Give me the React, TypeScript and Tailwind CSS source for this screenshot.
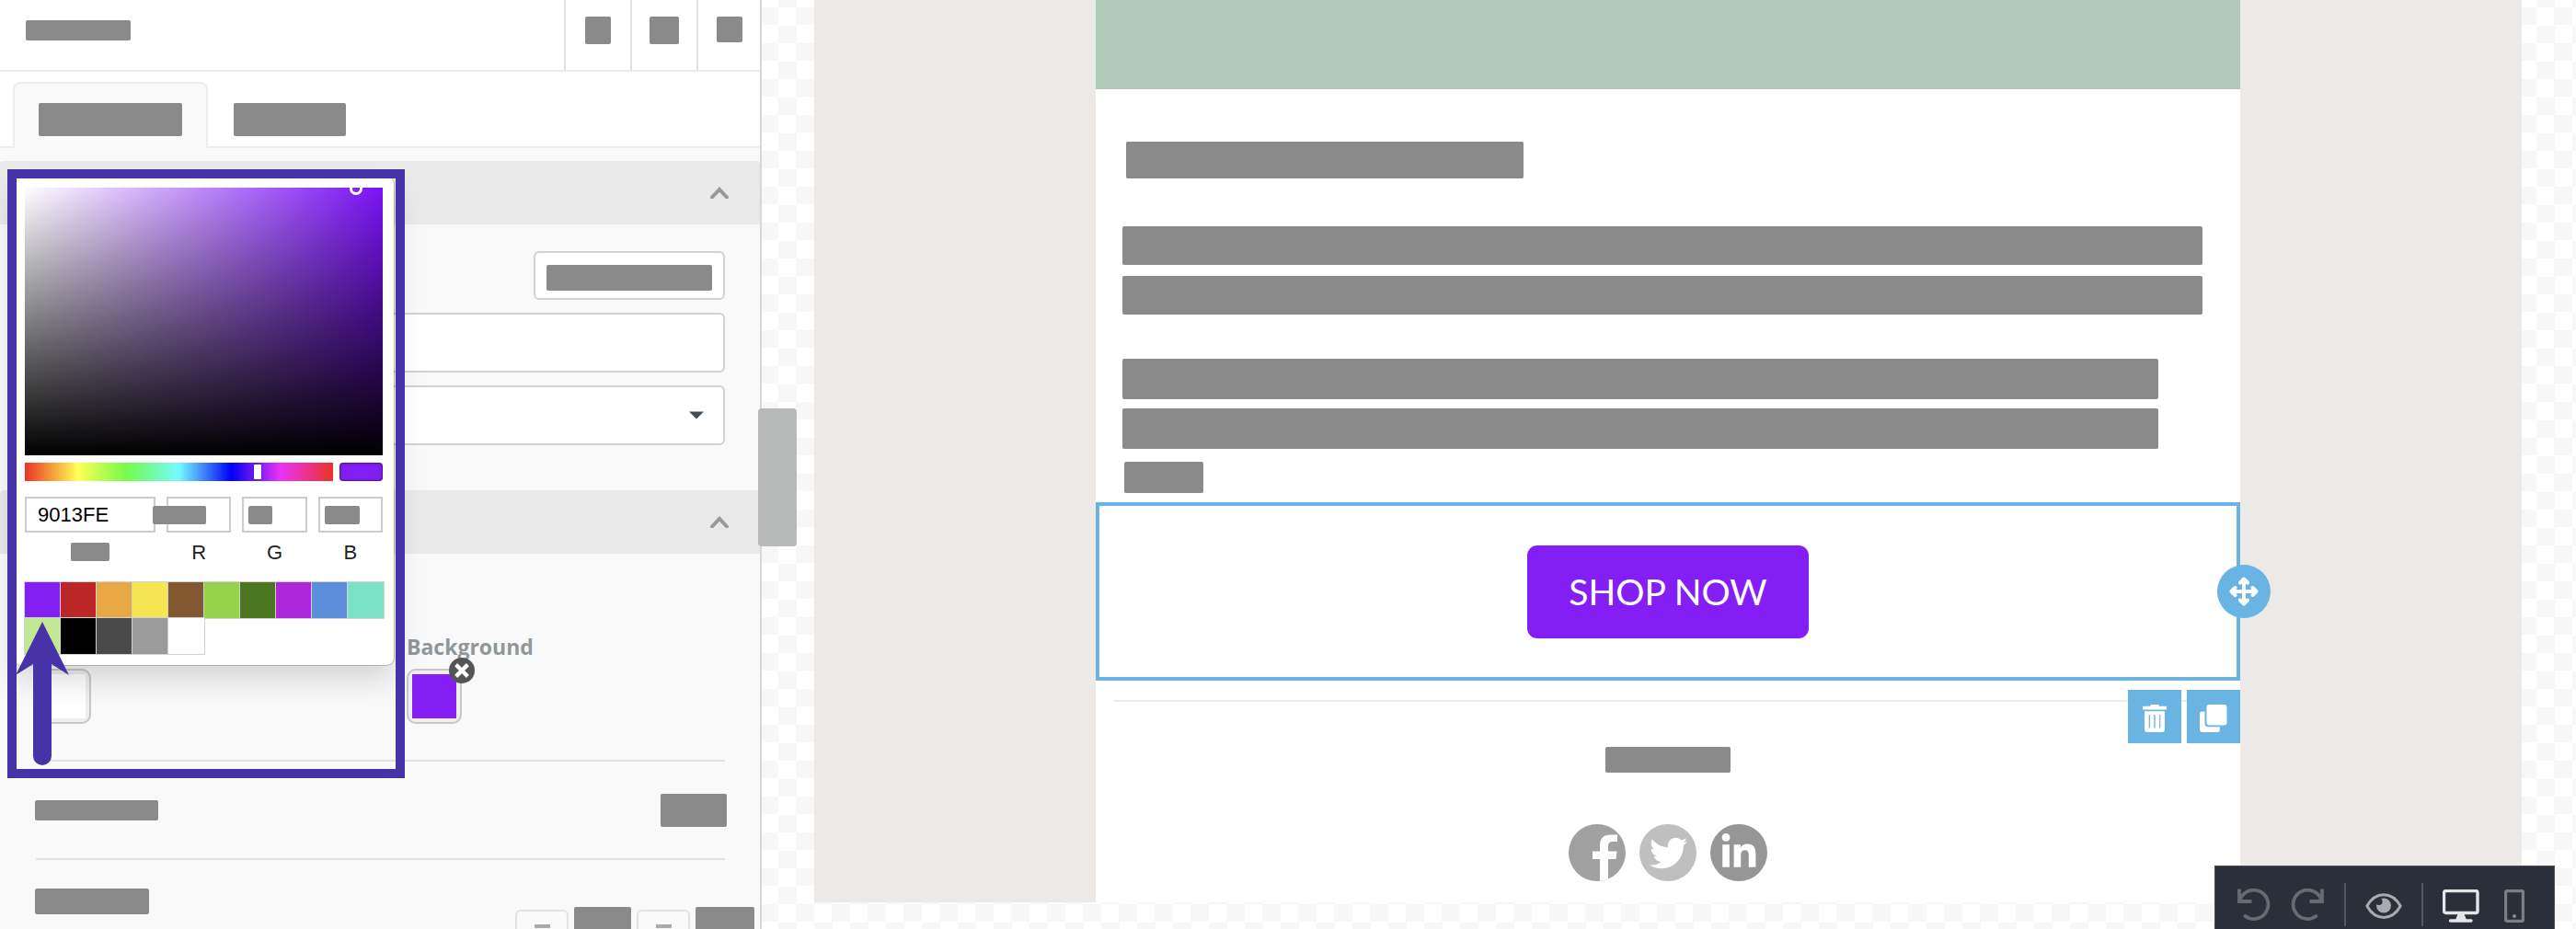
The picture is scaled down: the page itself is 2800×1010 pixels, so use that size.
import React, { useState } from "react";
import { FaTwitter, FaLinkedinIn } from "react-icons/fa";

/* Neutral block standing in for a piece of hidden copy. */
function Block({ className }: { className: string }) {
  return <span aria-hidden="true" className={`block rounded-xs bg-[#8a8a8a] ${className}`} />;
}

function Chevron() {
  return (
    <svg width="20" height="13" viewBox="0 0 20 13" fill="none" aria-hidden="true">
      <path d="M2 11.500 L10 3 L18 11.500" stroke="#999999" strokeWidth="4" strokeLinecap="round" />
    </svg>
  );
}

function SectionHeader({ label }: { label: string }) {
  return (
    <button
      type="button"
      aria-expanded="true"
      aria-label={label}
      className="flex h-[69px] w-full items-center justify-end rounded-t-sm bg-[#e9e9e9] pr-[34px]"
    >
      <Chevron />
    </button>
  );
}

function ColorWell({ label, color }: { label: string; color: string }) {
  return (
    <button
      type="button"
      aria-label={label}
      className="block size-[60px] rounded-[10px] border-2 border-[#c8c8c8] bg-[#eeeeee] p-1"
    >
      <span className="block size-full" style={{ backgroundColor: color }} />
    </button>
  );
}

function Stepper() {
  return (
    <button
      type="button"
      aria-label="Decrease"
      className="mt-[3px] flex h-10 w-[58px] justify-center rounded-md border-2 border-[#dfe3e3] bg-[#fafafa] pt-[14px]"
    >
      <span className="block h-1 w-[17px] bg-[#a9a9a9]" />
    </button>
  );
}

const HEADER_ACTIONS = [
  { cell: "w-[72px]", block: "h-[30px] w-7" },
  { cell: "w-[72px]", block: "h-[30px] w-8" },
  { cell: "w-[69px]", block: "h-7 w-7" },
];

function Sidebar() {
  return (
    <aside className="relative z-10 w-[828px] shrink-0 border-r-2 border-[#d5d8dd] bg-[#f9f9f9] font-['Open_Sans',sans-serif]">
      <header className="flex h-[78px] justify-between border-b-2 border-[#ececec] bg-white">
        <div className="pt-[22px] pl-7">
          <Block className="h-[22px] w-[114px]" />
        </div>
        <div className="flex">
          {HEADER_ACTIONS.map((action, i) => (
            <button
              key={i}
              type="button"
              aria-label={`Action ${i + 1}`}
              className={`flex items-start justify-center border-l-2 border-[#e2e2e4] pt-[18px] ${action.cell}`}
            >
              <Block className={action.block} />
            </button>
          ))}
        </div>
      </header>

      <div role="tablist" className="flex h-[83px] items-end border-b-2 border-[#ededed] bg-white pl-[14px]">
        <button
          type="button"
          role="tab"
          aria-selected="true"
          aria-label="Content"
          className="-mb-0.5 flex h-[72px] w-[212px] items-start rounded-t-lg border-2 border-b-0 border-[#ededed] bg-[#f9f9f9] px-[26px] pt-[21px]"
        >
          <Block className="h-9 w-full" />
        </button>
        <button
          type="button"
          role="tab"
          aria-selected="false"
          aria-label="Styles"
          className="-mb-0.5 flex h-[72px] items-start px-7 pt-[23px]"
        >
          <Block className="h-9 w-[122px]" />
        </button>
      </div>

      <div className="mt-[14px]">
        <SectionHeader label="Link section" />
        <div className="flex flex-col gap-[14px] pt-[29px] pr-[38px] pb-[49px] pl-[39px]">
          <button
            type="button"
            aria-label="Link type"
            className="flex h-[53px] w-[208px] items-center self-end rounded-md border-2 border-[#ced3d9] bg-white px-3 pt-1"
          >
            <Block className="h-7 w-full" />
          </button>
          <input
            aria-label="Link"
            className="h-[65px] w-full rounded-md border-2 border-[#ced3d9] bg-white px-4 text-2xl outline-none"
          />
          <div className="relative">
            <select
              aria-label="Target"
              className="block h-[65px] w-full appearance-none rounded-md border-2 border-[#ced3d9] bg-white px-4 text-2xl"
            >
              <option value="" />
            </select>
            <svg
              className="pointer-events-none absolute top-7 right-[23px]"
              width="16"
              height="9"
              viewBox="0 0 16 9"
              aria-hidden="true"
            >
              <path d="M0 0.5 H16 L8 8.5 Z" fill="#454c53" />
            </svg>
          </div>
        </div>
      </div>

      <SectionHeader label="Button section" />
      <div className="pt-[85px] pr-[38px] pl-[39px]">
        <div className="flex items-end border-b-2 border-[#e0e1e6] pb-[39px]">
          <div className="w-[403px]">
            <ColorWell label="Text color" color="#ffffff" />
          </div>
          <div className="flex flex-col gap-2">
            <span className="text-[23px]/8 font-bold text-[#8f979b]">Background</span>
            <div className="relative w-[60px]">
              <ColorWell label="Background color" color="#831ff4" />
              <button
                type="button"
                aria-label="Clear background"
                className="absolute -top-3 -right-[14px] flex size-7 items-center justify-center rounded-full bg-[#555555]"
              >
                <svg width="16" height="16" viewBox="0 0 16 16" fill="none" aria-hidden="true">
                  <path d="M3.2 3.2 L12.8 12.8 M12.8 3.2 L3.2 12.8" stroke="#fff" strokeWidth="4.4" strokeLinecap="square" />
                </svg>
              </button>
            </div>
          </div>
        </div>
        <div className="flex h-[107px] items-center justify-between border-b-2 border-[#e0e1e6]">
          <Block className="-ml-px h-[22px] w-[134px]" />
          <Block className="-mr-0.5 h-9 w-[72px]" />
        </div>
        <div className="flex justify-between pt-[31px]">
          <Block className="-ml-px h-7 w-[124px]" />
          <div className="-mr-8 flex gap-1.5 pt-5">
            <Stepper />
            <Block className="h-10 w-[62px]" />
            <Stepper />
            <Block className="h-10 w-16" />
          </div>
        </div>
      </div>

      <div className="absolute top-[444px] -right-10 h-[150px] w-[42px] rounded-sm bg-[#b8bab9]" />
    </aside>
  );
}

const SWATCHES = [
  "#831ff4", "#bb2727", "#e8a844", "#f5e652", "#84582f", "#93d24a", "#4b7520", "#ac27d8",
  "#5c8fdb", "#7de2c5", "#c1e891", "#000000", "#4a4a4a", "#9b9b9b", "#ffffff",
];

const CHANNELS = [
  { name: "R", block: "-left-[15px] w-[58px]" },
  { name: "G", block: "left-[7px] w-[26px]" },
  { name: "B", block: "left-[7px] w-[38px]" },
];

function ColorPicker() {
  const [hex, setHex] = useState("9013FE");
  const [hue, setHue] = useState(274);
  return (
    <div
      role="dialog"
      aria-label="Color picker"
      className="absolute top-[192px] left-[15px] z-20 w-[413px] rounded-lg bg-white p-3 font-['Liberation_Sans',Arial,sans-serif] shadow-[0_0_0_1px_rgba(0,0,0,0.2),0_16px_32px_rgba(0,0,0,0.15)]"
    >
      <div
        role="img"
        aria-label="Saturation and brightness"
        className="relative h-[291px] overflow-hidden bg-[#7a12f5] bg-[linear-gradient(to_top,#000,transparent),linear-gradient(to_right,#fff,transparent)]"
      >
        <span className="absolute -top-[6px] left-[353px] size-[14px] rounded-full border-3 border-white" />
      </div>

      <div className="mt-2 flex h-5 items-stretch gap-[7px]">
        <input
          type="range"
          aria-label="Hue"
          min={0}
          max={360}
          value={hue}
          onChange={(e) => setHue(Number(e.target.value))}
          className="h-5 min-w-0 flex-1 appearance-none bg-[linear-gradient(to_right,#ea3423_0%,#ffff54_17%,#75fb4c_33%,#75fbfd_50%,#0000f5_67%,#ea33f7_83%,#ea3323_100%)] [&::-webkit-slider-thumb]:h-4 [&::-webkit-slider-thumb]:w-2 [&::-webkit-slider-thumb]:appearance-none [&::-webkit-slider-thumb]:rounded-[1px] [&::-webkit-slider-thumb]:bg-white [&::-webkit-slider-thumb]:shadow-[0_0_2px_rgba(0,0,0,0.6)]"
        />
        <span className="w-[47px] rounded-sm bg-[#831ff4] shadow-[inset_0_0_0_1px_rgba(0,0,0,0.25),inset_0_0_4px_rgba(0,0,0,0.3)]" />
      </div>

      <div className="mt-[17px] flex gap-3">
        <label className="flex w-[142px] flex-col">
          <input
            value={hex}
            onChange={(e) => setHex(e.target.value)}
            className="h-[39px] w-full border-2 border-[#cccccc] bg-white pl-3 text-[22px] text-black outline-none"
          />
          <Block className="mx-auto mt-[11px] h-5 w-[42px]" />
        </label>
        {CHANNELS.map((c) => (
          <label key={c.name} className="relative flex min-w-0 flex-1 flex-col text-center text-[22px] text-[#222222]">
            <input className="h-[39px] w-full border-2 border-[#cccccc] bg-white outline-none" />
            <span aria-hidden="true" className={`absolute top-[10px] h-5 rounded-xs bg-[#8a8a8a] ${c.block}`} />
            <span className="mt-2 leading-7">{c.name}</span>
          </label>
        ))}
      </div>

      <div className="mt-[18px] flex w-[390px] flex-wrap">
        {SWATCHES.map((color) => (
          <button
            key={color}
            type="button"
            aria-label={color}
            className="size-[39px] shadow-[0_0_0_1px_#d2d2d2]"
            style={{ backgroundColor: color }}
          />
        ))}
      </div>
    </div>
  );
}

/* Highlight frame with an arrow that points at the first swatch. */
function Callout() {
  return (
    <div className="pointer-events-none absolute top-[184px] left-2 z-30 h-[662px] w-[432px] border-10 border-[#4733a7]">
      <svg className="absolute top-[482px] left-0" width="58" height="156" viewBox="0 0 58 156" aria-hidden="true">
        <path d="M28 0 L57 58 L38 46 V146 A10 10 0 0 1 18 146 V46 L-1 58 Z" fill="#4733a7" />
      </svg>
    </div>
  );
}

function MoveIcon() {
  return (
    <svg width="32" height="32" viewBox="0 0 32 32" fill="none" stroke="#fff" strokeWidth="4" strokeLinecap="round" strokeLinejoin="round" aria-hidden="true">
      <path d="M16 3 V29 M3 16 H29" />
      <path d="M12 6.500 L16 2.500 L20 6.500 M12 25.500 L16 29.500 L20 25.500 M6.500 12 L2.500 16 L6.500 20 M25.500 12 L29.500 16 L25.500 20" />
    </svg>
  );
}

function TrashIcon() {
  return (
    <svg width="26" height="30" viewBox="0 0 26 30" fill="#fff" aria-hidden="true">
      <path d="M0 1.800 H8 L9 0 H17 L18 1.800 H26 V5.600 H0 Z" />
      <path fillRule="evenodd" d="M2 7.200 H24 V27 Q24 30 21 30 H5 Q2 30 2 27 Z M6.700 11 V25.500 H7.900 V11 Z M12.300 11 V25.500 H13.700 V11 Z M18.100 11 V25.500 H19.300 V11 Z" />
    </svg>
  );
}

function CopyIcon() {
  return (
    <svg width="30" height="30" viewBox="0 0 30 30" fill="#fff" aria-hidden="true">
      <rect x="7.500" y="0" width="22" height="22.500" rx="3" />
      <path d="M5.500 7.500 H3 Q0 7.500 0 10.500 V27 Q0 30 3 30 H19 Q22 30 22 27 V24.200 H9.500 Q5.500 24.200 5.500 20.200 Z" />
    </svg>
  );
}

function EmailCanvas() {
  return (
    <main className="min-w-0 flex-1 bg-[repeating-conic-gradient(#f7f7f7_0_25%,#ffffff_0_50%)] bg-size-[39px_39px] bg-position-[18px_8px] pr-[59px] pl-[57px]">
      <div className="bg-[#ede9e6]">
        <div className="mx-auto w-full max-w-[1244px] bg-white">
          <div className="h-[97px] bg-[#b0cab9]" />
          <div className="pt-[57px] pr-[41px] pb-[10px] pl-[29px]">
            <Block className="ml-1 h-10 w-[432px]" />
            <div className="mt-[52px] flex flex-col gap-3">
              <Block className="h-[42px] w-full" />
              <Block className="h-[42px] w-full" />
            </div>
            <div className="mt-12 flex flex-col gap-[10px] pr-12">
              <Block className="h-11 w-full" />
              <Block className="h-11 w-full" />
            </div>
            <Block className="mt-[14px] ml-0.5 h-[34px] w-[86px]" />
          </div>

          <div className="relative flex h-[194px] items-center justify-center border-4 border-[#6ab4e4] bg-white">
            <button
              type="button"
              className="h-[101px] rounded-[11px] bg-[#831ff4] px-[45px] font-['Lato',sans-serif] text-[39px] text-white"
            >
              SHOP NOW
            </button>
            <button
              type="button"
              aria-label="Move block"
              className="absolute top-16 -right-[37px] flex size-[58px] items-center justify-center rounded-full bg-[#6ab4e4]"
            >
              <MoveIcon />
            </button>
            <div className="absolute top-[200px] -right-1 flex gap-1.5">
              <button type="button" aria-label="Delete block" className="flex size-[58px] items-center justify-center bg-[#6ab4e4] pt-1">
                <TrashIcon />
              </button>
              <button type="button" aria-label="Duplicate block" className="flex size-[58px] items-center justify-center bg-[#6ab4e4] pt-1">
                <CopyIcon />
              </button>
            </div>
          </div>

          <hr className="mx-5 mt-[21px] border-t-2 border-[#ebebeb]" />
          <div className="flex flex-col items-center gap-14 pt-[49px] pb-[23px]">
            <Block className="h-7 w-[136px]" />
            <div className="flex gap-[15px] text-white">
              <a href="#facebook" aria-label="Facebook" className="flex size-[62px] items-end justify-center overflow-hidden rounded-full bg-[#a1a1a1] pl-4">
                <svg width="27" height="51" viewBox="0 0 27 51" fill="currentColor" aria-hidden="true">
                  <path d="M27 0.500 V8 H22 Q17 8 17 13 V18.500 H26.500 L25.500 27 H17 V51 H8 V27 H0 V18.500 H8 V12 Q8 0.500 20 0.500 Z" />
                </svg>
              </a>
              <a href="#twitter" aria-label="Twitter" className="flex size-[62px] items-center justify-center rounded-full bg-[#bfbfbf]">
                <FaTwitter size={41} />
              </a>
              <a href="#linkedin" aria-label="LinkedIn" className="flex size-[62px] items-center justify-center rounded-full bg-[#969696]">
                <FaLinkedinIn size={42} />
              </a>
            </div>
          </div>
        </div>
      </div>
    </main>
  );
}

function UndoIcon() {
  return (
    <svg width="36" height="36" viewBox="0 0 36 36" fill="none" stroke="currentColor" strokeWidth="3.800" aria-hidden="true">
      <path d="M2 0.500 V14 H15.500" />
      <path d="M2.500 13.500 A15.700 15.700 0 1 1 8.500 30" strokeLinecap="round" />
    </svg>
  );
}

function EditorToolbar() {
  return (
    <div
      role="toolbar"
      aria-label="Editor tools"
      className="absolute right-[23px] bottom-0 z-20 flex h-[69px] w-[370px] items-start border border-b-0 border-[#4c4f54] bg-[#2a2f39] pt-[18px] pl-6 text-[#666a71]"
    >
      <button type="button" aria-label="Undo" className="mt-1.5 w-9">
        <UndoIcon />
      </button>
      <button type="button" aria-label="Redo" className="mt-1.5 ml-[22px] w-9">
        <span className="block -scale-x-100">
          <UndoIcon />
        </span>
      </button>
      <span className="ml-[22px] h-[47px] w-0.5 bg-[#55595f]" />
      <button type="button" aria-label="Preview" className="mt-[11px] ml-[21px] w-10">
        <svg width="40" height="28" viewBox="0 0 40 28" fill="none" aria-hidden="true">
          <path d="M1.800 14 C11 -2.500 29 -2.500 38.200 14 C29 30.500 11 30.500 1.800 14 Z" stroke="#a9abaf" strokeWidth="3" strokeLinejoin="round" />
          <circle cx="20" cy="13.500" r="8" fill="#a9abaf" />
          <circle cx="14.800" cy="9.300" r="3.800" fill="#2a2f39" />
        </svg>
      </button>
      <span className="ml-[21px] h-[47px] w-0.5 bg-[#55595f]" />
      <button type="button" aria-label="Desktop view" className="mt-[7px] ml-[21px] w-10">
        <svg width="40" height="36" viewBox="0 0 40 36" fill="none" aria-hidden="true">
          <rect x="1.500" y="1.500" width="36.500" height="24" rx="2" stroke="#e3e5e7" strokeWidth="3.400" />
          <path d="M17 27 H23 L25.500 33 H14.500 Z" fill="#e3e5e7" stroke="#e3e5e7" />
          <path d="M8.500 34 H31" stroke="#e3e5e7" strokeWidth="3.400" strokeLinecap="round" />
        </svg>
      </button>
      <button type="button" aria-label="Mobile view" className="mt-[7px] ml-[27px] w-[22px]">
        <svg width="22" height="36" viewBox="0 0 22 36" fill="none" aria-hidden="true">
          <rect x="1.500" y="1.500" width="19" height="33" rx="2" stroke="#7b7e85" strokeWidth="3.400" />
          <circle cx="11" cy="29" r="2" fill="#8b8e94" />
        </svg>
      </button>
    </div>
  );
}

export default function App() {
  return (
    <div className="relative flex h-screen items-stretch overflow-hidden bg-white">
      <Sidebar />
      <EmailCanvas />
      <ColorPicker />
      <Callout />
      <EditorToolbar />
    </div>
  );
}
